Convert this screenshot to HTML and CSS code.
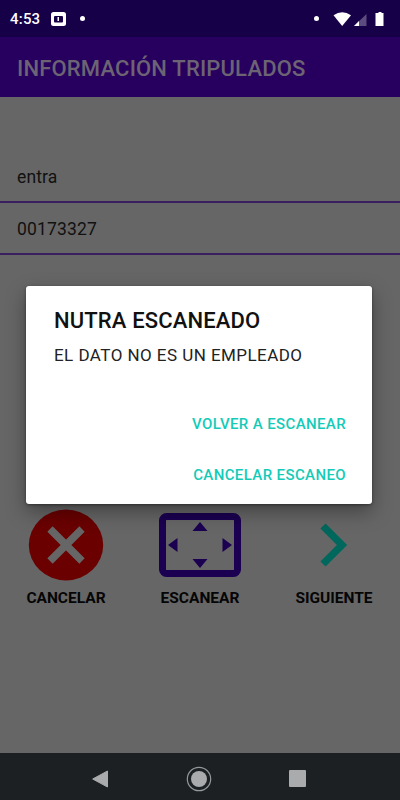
FILE: index.html
```html
<!DOCTYPE html>
<html lang="es">
<head>
    <meta charset="UTF-8">
    <meta name="viewport" content="width=device-width, initial-scale=1.0">
    <title>Información Tripulados</title>
    <link rel="stylesheet" href="styles.css">
</head>
<body>

<div class="status-bar">
    <span class="clock">4:53</span>
    <svg class="app-icon" width="15" height="14" viewBox="0 0 15 14">
        <rect width="15" height="14" rx="2.5" fill="#fff"/>
        <rect x="3" y="4" width="9" height="6.5" rx="1" fill="#160048"/>
        <rect x="6.500" y="5" width="1.500" height="4" fill="#fff"/>
    </svg>
    <span class="dot"></span>
    <span class="dot dot-right"></span>
    <svg class="status-icons" width="52" height="16" viewBox="0 0 52 16">
        <path d="M1.500 4.200Q10.200 -1.800 19 4.200L10.200 15z" fill="#fff"/>
        <path d="M34.500 3V15H22z" fill="#5c4c7f"/>
        <path d="M27 10V15H22z" fill="#fff"/>
        <path d="M45.500 2H46.500V1H49.500V2H51.500V15H43.500V2z" fill="#fff"/>
    </svg>
</div>

<header>
    <h1>INFORMACIÓN TRIPULADOS</h1>
</header>

<main>
    <div class="field">entra</div>
    <div class="field">00173327</div>

    <div class="actions">
        <div class="action">
            <svg width="76" height="72" viewBox="0 0 76 72">
                <ellipse cx="38" cy="36" rx="37.2" ry="35.5" fill="#6a0000"/>
                <path d="M22 20L54 52M54 20L22 52" stroke="#666" stroke-width="7.5"/>
            </svg>
            <span class="label">CANCELAR</span>
        </div>
        <div class="action">
            <svg width="84" height="72" viewBox="0 0 84 72">
                <rect x="4.5" y="7.5" width="75" height="57" rx="4" fill="none" stroke="#1b0051" stroke-width="7"/>
                <path d="M42 13L49.500 22H34.500zM42 59L49.500 50H34.500zM10 36L19.500 29V43zM74 36L64.500 29V43z" fill="#1b0051"/>
            </svg>
            <span class="label">ESCANEAR</span>
        </div>
        <div class="action">
            <svg width="76" height="72" viewBox="0 0 76 72">
                <path d="M27 17L46 36L27 55" fill="none" stroke="#00675c" stroke-width="7.300"/>
            </svg>
            <span class="label">SIGUIENTE</span>
        </div>
    </div>
</main>

<div class="nav-bar">
    <svg width="16" height="18" viewBox="0 0 16 18">
        <path d="M15.500 1V17L0.700 9z" fill="#a9abac" stroke="#a9abac" stroke-linejoin="round"/>
    </svg>
    <svg width="26" height="26" viewBox="0 0 26 26">
        <circle cx="13" cy="13" r="11.700" fill="none" stroke="#96999a" stroke-width="1.200"/>
        <circle cx="13" cy="13" r="8" fill="#a9abac"/>
    </svg>
    <svg width="17" height="17" viewBox="0 0 17 17">
        <rect width="17" height="17" rx="1" fill="#a9abac"/>
    </svg>
</div>

<div class="dialog">
    <h2>NUTRA ESCANEADO</h2>
    <p>EL DATO NO ES UN EMPLEADO</p>
    <div class="dialog-buttons">
        <button>VOLVER A ESCANEAR</button>
        <button>CANCELAR ESCANEO</button>
    </div>
</div>

</body>
</html>
```
FILE: styles.css
```css
* {
    box-sizing: border-box;
}
body {
    margin: 0;
    width: 400px;
    height: 800px;
    display: flex;
    flex-direction: column;
    overflow: hidden;
    position: relative;
    background-color: #666;
    font-family: Roboto, sans-serif;
}
svg {
    display: block;
    flex-shrink: 0;
}
.status-bar {
    height: 37px;
    padding: 0 16px 0 10px;
    display: flex;
    align-items: center;
    background-color: #160048;
}
.clock {
    width: 31px;
    margin-right: 10px;
    color: #fff;
    font-size: 15px;
    font-weight: 500;
    letter-spacing: 0.2px;
    white-space: nowrap;
}
.dot {
    width: 5px;
    height: 5px;
    margin-left: 14px;
    border-radius: 50%;
    background-color: #fff;
}
.dot-right {
    margin-left: auto;
    margin-right: 13px;
}
header {
    height: 60px;
    padding: 0 17px;
    display: flex;
    align-items: center;
    background-color: #27005f;
}
h1 {
    margin: 0;
    padding-top: 2px;
    color: #6c6473;
    font-size: 22px;
    font-weight: 500;
    letter-spacing: 0.18px;
    white-space: nowrap;
}
main {
    flex: 1;
    padding-top: 54px;
}
.field {
    height: 52px;
    padding: 1px 17px 0;
    border-bottom: 2px solid #381f60;
    color: #111;
    font-size: 17.5px;
    letter-spacing: 0.15px;
    line-height: 50px;
}
.actions {
    margin-top: 254px;
    padding: 0 24px;
    display: flex;
    justify-content: space-between;
}
.action {
    width: 84px;
    display: flex;
    flex-direction: column;
    align-items: center;
}
.label {
    margin-top: 8px;
    color: #050505;
    font-size: 15.5px;
    font-weight: 700;
    line-height: 18px;
    white-space: nowrap;
}
.nav-bar {
    height: 47px;
    padding: 4px 94px 0 92px;
    display: flex;
    align-items: center;
    justify-content: space-between;
    background-color: #1c2022;
}
/* Alert shown over the dimmed screen */
.dialog {
    position: absolute;
    top: 286px;
    left: 26px;
    width: 346px;
    height: 218px;
    padding: 21px 26px 0 28px;
    border-radius: 3px;
    background-color: #fff;
    box-shadow: 0 8px 20px rgba(0, 0, 0, 0.35), 0 1px 3px rgba(0, 0, 0, 0.4);
}
.dialog h2 {
    margin: 0;
    color: #111;
    font-size: 22px;
    font-weight: 500;
    letter-spacing: 0.15px;
    line-height: 28px;
    white-space: nowrap;
}
.dialog p {
    margin: 8px 0 0;
    color: #222;
    font-size: 17px;
    letter-spacing: 0.45px;
    line-height: 24px;
    white-space: nowrap;
}
.dialog-buttons {
    margin-top: 31px;
    display: flex;
    flex-direction: column;
    align-items: flex-end;
}
.dialog button {
    height: 51px;
    padding: 0;
    border: none;
    background: none;
    color: #14cbb8;
    font-family: inherit;
    font-size: 15px;
    font-weight: 500;
    letter-spacing: 0.38px;
    white-space: nowrap;
}
```
